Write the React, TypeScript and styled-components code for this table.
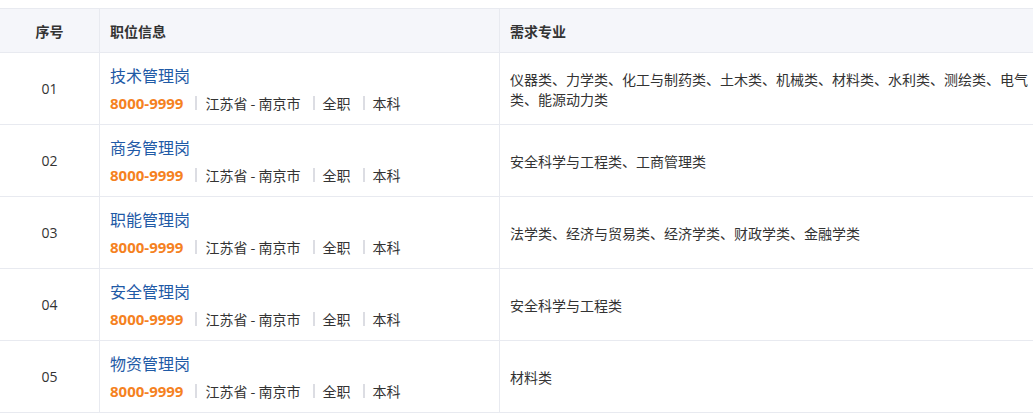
import React from "react"
import styled, { createGlobalStyle } from "styled-components"

const GlobalStyle = createGlobalStyle`
  html, body {
    margin: 0;
    padding: 0;
    background: #ffffff;
    overflow: hidden;
  }
  body {
    padding-top: 8px;
    font-family: "Open Sans", "Noto Sans CJK SC", sans-serif;
    color: #333;
  }
`

const COLS = "100px 400px 540px"

const Table = styled.div`
  width: 1040px;
  border-top: 1px solid #e8eaf0;
`

const HeadRow = styled.div`
  display: grid;
  grid-template-columns: ${COLS};
  height: 44px;
  background: #f5f6fa;
  border-bottom: 1px solid #e8eaf0;
  box-sizing: border-box;
`

const HeadCell = styled.div<{ $center?: boolean }>`
  display: flex;
  align-items: center;
  justify-content: ${(p) => (p.$center ? "center" : "flex-start")};
  padding: 0 10px;
  border-right: 1px solid #e8eaf0;
  font-size: 14px;
  font-weight: 700;
  color: #333;
  font-family: "Noto Sans CJK SC", sans-serif;
`

const Row = styled.div`
  display: grid;
  grid-template-columns: ${COLS};
  height: 72px;
  border-bottom: 1px solid #e8eaf0;
  box-sizing: border-box;
`

const Cell = styled.div<{ $center?: boolean }>`
  display: flex;
  flex-direction: column;
  justify-content: center;
  align-items: ${(p) => (p.$center ? "center" : "flex-start")};
  padding: 0 10px;
  border-right: 1px solid #e8eaf0;
  font-size: 14px;
  color: #333;
`

const InfoCell = styled.div`
  padding: 11px 10px 0;
  border-right: 1px solid #e8eaf0;
`

const Title = styled.a`
  display: block;
  font-size: 16px;
  line-height: 22px;
  color: #1f5aa6;
  text-decoration: none;
  font-family: "Noto Sans CJK SC", sans-serif;
`

const Meta = styled.div`
  display: flex;
  align-items: center;
  margin-top: 6px;
  height: 22px;
  font-size: 14px;
  color: #333;
  font-family: "Noto Sans CJK SC", sans-serif;
`

const Salary = styled.span`
  font-family: "Open Sans", sans-serif;
  font-weight: 700;
  font-size: 15px;
  color: #f5821f;
`

const MetaItem = styled.span`
  display: flex;
  align-items: center;
  white-space: pre;
  &::before {
    content: "";
    display: inline-block;
    width: 2px;
    height: 14px;
    background: #dcdde3;
    margin: 0 8px 0 12px;
  }
`

const Majors = styled.div`
  font-size: 14px;
  line-height: 20px;
  color: #333;
  font-family: "Noto Sans CJK SC", sans-serif;
`

const jobs = [
  {
    no: "01",
    title: "技术管理岗",
    majors:
      "仪器类、力学类、化工与制药类、土木类、机械类、材料类、水利类、测绘类、电气类、能源动力类",
  },
  { no: "02", title: "商务管理岗", majors: "安全科学与工程类、工商管理类" },
  {
    no: "03",
    title: "职能管理岗",
    majors: "法学类、经济与贸易类、经济学类、财政学类、金融学类",
  },
  { no: "04", title: "安全管理岗", majors: "安全科学与工程类" },
  { no: "05", title: "物资管理岗", majors: "材料类" },
]

const App: React.FC = () => {
  return (
    <>
      <GlobalStyle />
      <Table>
        <HeadRow>
          <HeadCell $center>序号</HeadCell>
          <HeadCell>职位信息</HeadCell>
          <HeadCell>需求专业</HeadCell>
        </HeadRow>
        {jobs.map((job) => (
          <Row key={job.no}>
            <Cell $center>{job.no}</Cell>
            <InfoCell>
              <Title href="#">{job.title}</Title>
              <Meta>
                <Salary>8000-9999</Salary>
                <MetaItem>江苏省 - 南京市</MetaItem>
                <MetaItem>全职</MetaItem>
                <MetaItem>本科</MetaItem>
              </Meta>
            </InfoCell>
            <Cell>
              <Majors>{job.majors}</Majors>
            </Cell>
          </Row>
        ))}
      </Table>
    </>
  )
}

export default App
